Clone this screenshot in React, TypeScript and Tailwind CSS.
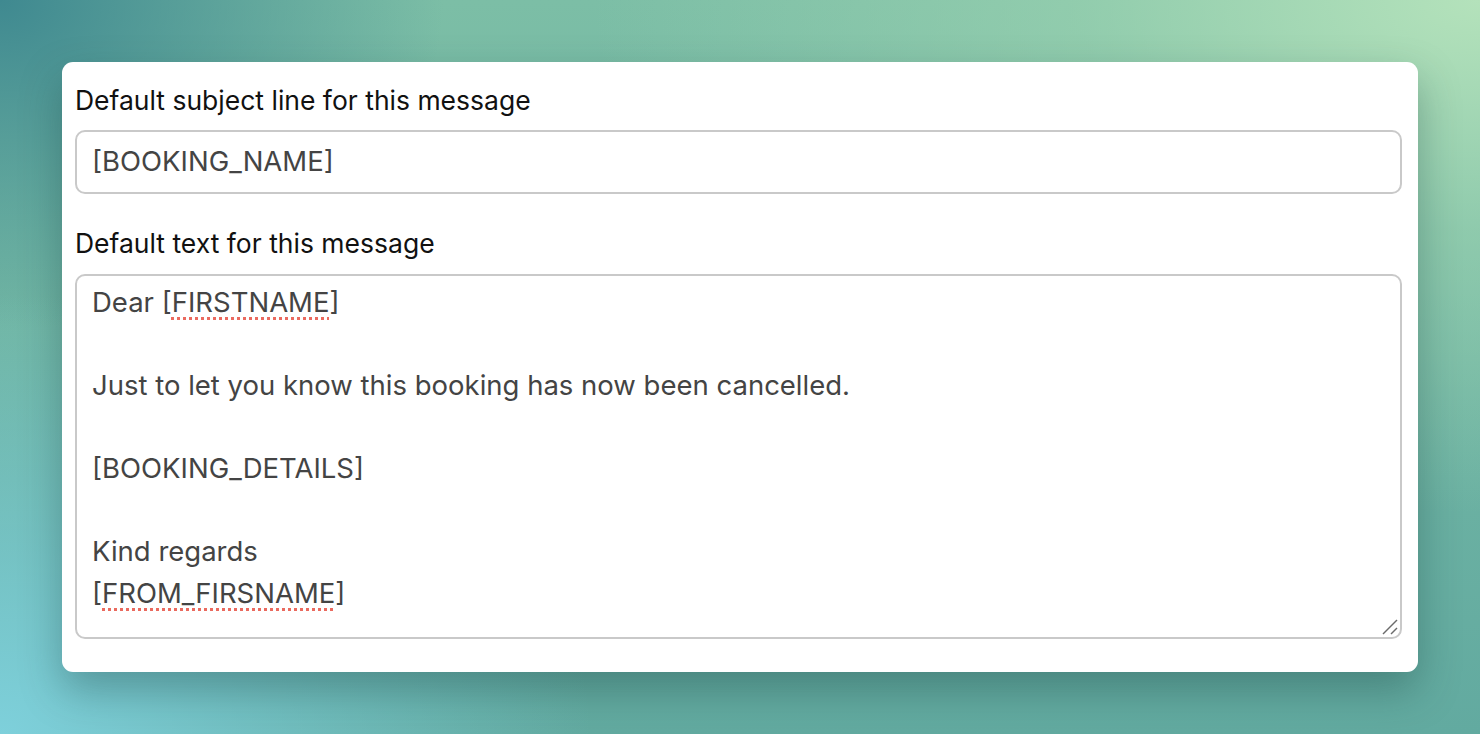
import React from "react";

const sq = "underline decoration-dotted decoration-[#ea6a5f] decoration-[3px] underline-offset-[5px]";

export default function App() {
  return (
    <div
      className="w-[1480px] h-[734px] overflow-hidden bg-[#5fa9a0] bg-[radial-gradient(ellipse_60%_70%_at_100%_0%,#b4e2bb_0%,rgba(160,214,178,0.6)_45%,rgba(160,214,178,0)_100%),radial-gradient(ellipse_40%_60%_at_0%_100%,#7ed0db_0%,rgba(126,208,219,0)_100%),radial-gradient(ellipse_30%_45%_at_0%_0%,#3f8990_0%,rgba(63,137,144,0)_100%),linear-gradient(to_bottom,#7cbea6_0%,#62aaa0_100%)] flex items-start justify-center pt-[62px]"
      style={{ fontFamily: "Inter, 'Noto Sans', sans-serif" }}
    >
      <div className="w-[1356px] bg-white rounded-[11px] shadow-[0_18px_40px_rgba(20,60,60,0.35)] pl-[13px] pr-[16px] pt-[20px] pb-[33px] flex flex-col">
        <label className="text-[26.5px] leading-[36px] text-[#111]">Default subject line for this message</label>
        <div className="mt-[12px] h-[64px] border-2 border-[#c9c9c9] rounded-[10px] flex items-center pl-[15px] text-[27.5px] text-[#444]">
          [BOOKING_NAME]
        </div>
        <label className="mt-[31px] text-[26.5px] leading-[36px] text-[#111]">Default text for this message</label>
        <div className="relative mt-[13px] h-[365px] border-2 border-[#c9c9c9] rounded-[10px] pl-[15px] pt-[6px] text-[27.5px] leading-[41.5px] text-[#444] whitespace-pre-wrap">
          <div>Dear [<span className={sq}>FIRSTNAME</span>]</div>
          <div>&nbsp;</div>
          <div>Just to let you know this booking has now been cancelled.</div>
          <div>&nbsp;</div>
          <div>[BOOKING_DETAILS]</div>
          <div>&nbsp;</div>
          <div>Kind regards</div>
          <div>[<span className={sq}>FROM_FIRSNAME</span>]</div>
          <svg className="absolute right-[2px] bottom-[2px]" width="16" height="16" viewBox="0 0 16 16">
            <line x1="1" y1="15" x2="15" y2="1" stroke="#6b6b6b" strokeWidth="1.4" />
            <line x1="9" y1="15" x2="15" y2="9" stroke="#6b6b6b" strokeWidth="1.4" />
          </svg>
        </div>
      </div>
    </div>
  );
}
